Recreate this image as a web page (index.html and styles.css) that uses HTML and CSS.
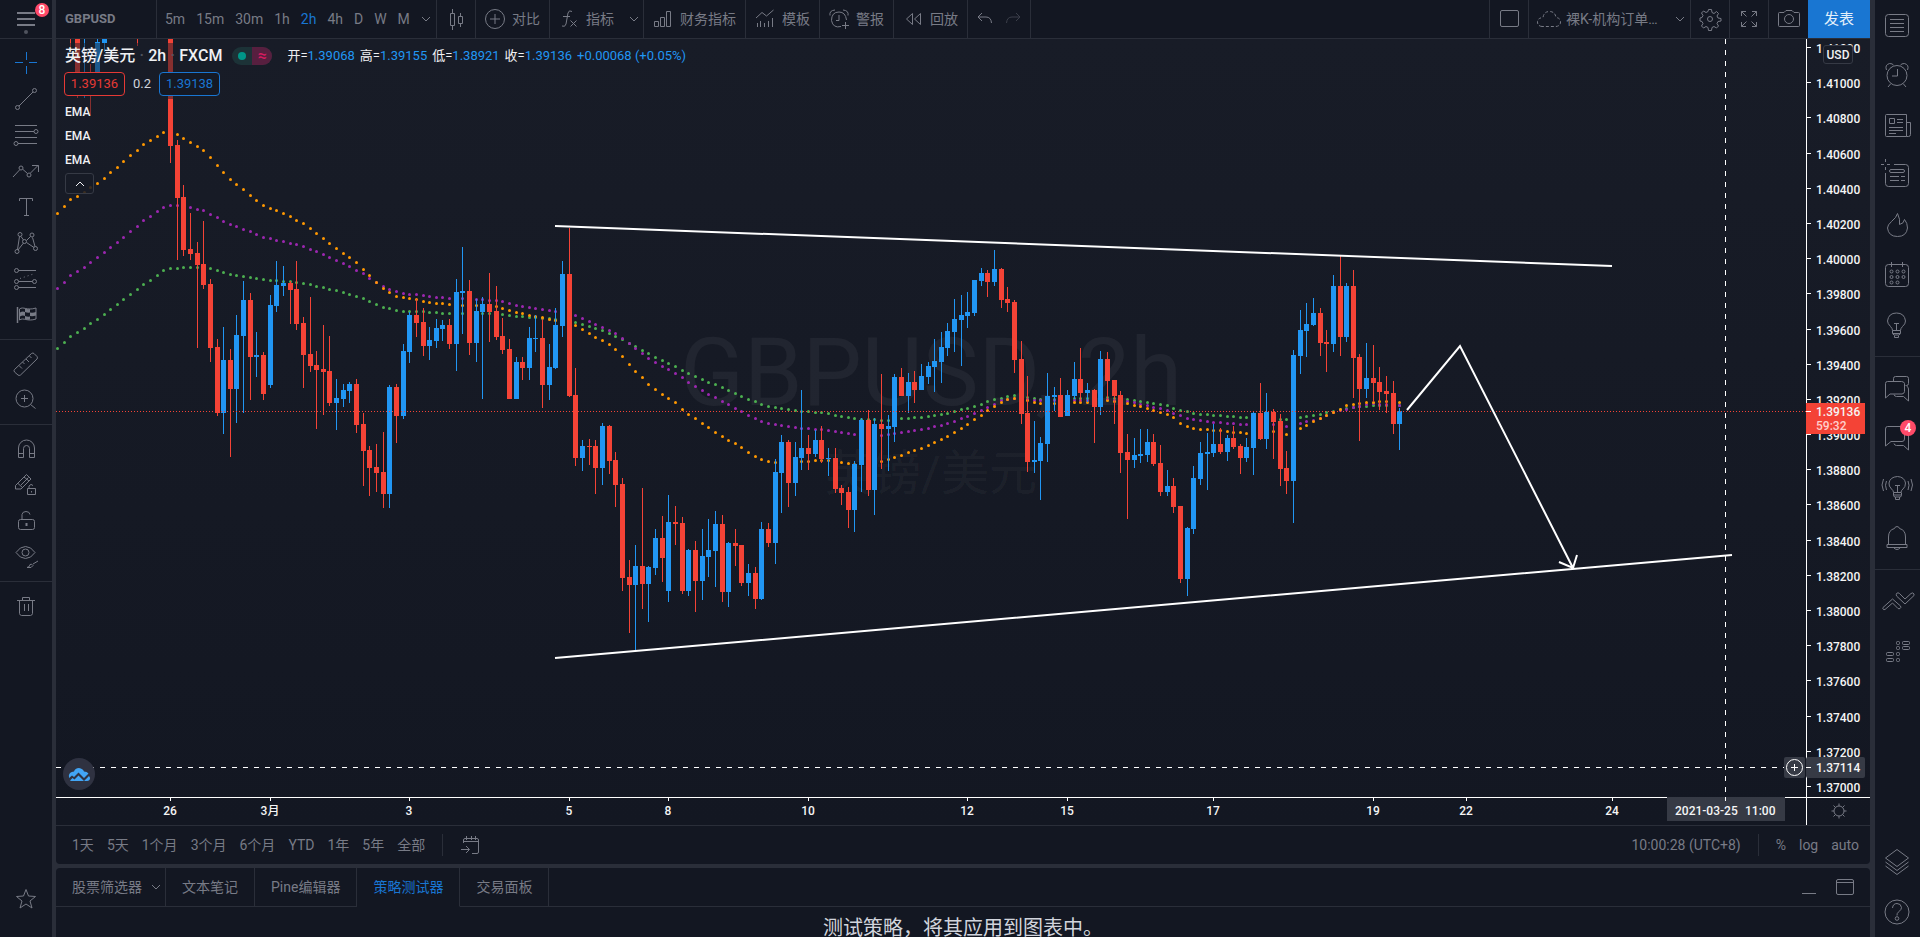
FILE: index.html
```html
<!DOCTYPE html>
<html lang="zh-CN">
<head>
<meta charset="utf-8">
<title>GBPUSD 2h</title>
<link rel="stylesheet" href="styles.css">
</head>
<body>
<div class="app">

<aside class="side left">
  <button class="menu" aria-label="菜单">
    <svg class="ico" viewBox="0 0 28 28"><path stroke-width="2" d="M5 8h18M5 14h18M5 20h18"/></svg>
    <span class="dot"></span>
    <span class="badge">8</span>
  </button>
  <div class="tools">
    <button aria-label="十字线"><svg class="ico on" viewBox="0 0 28 28"><path d="M3 13.500h8M17 13.500h8M14.500 3v8M14.500 17v8"/></svg></button>
    <button aria-label="趋势线"><svg class="ico" viewBox="0 0 28 28"><path d="M7 21L21 7"/><circle cx="5.500" cy="22.500" r="2"/><circle cx="22.500" cy="5.500" r="2"/></svg></button>
    <button aria-label="斐波那契"><svg class="ico" viewBox="0 0 28 28"><path d="M3 4.500h22M3 10.500h19M3 16.500h22M6 22.500h19"/><circle cx="24" cy="10.500" r="2"/><circle cx="4" cy="22.500" r="2"/></svg></button>
    <button aria-label="形状"><svg class="ico" viewBox="0 0 28 28"><path d="M1 20l6.500-7M11 12.500l4.500 4M18.500 16L26 8.500M20 8.500h6.500V15"/><circle cx="9" cy="11" r="2"/><circle cx="17" cy="18" r="2"/></svg></button>
    <button aria-label="文字"><svg class="ico" viewBox="0 0 28 28"><path d="M7.500 8V5.500h13V8M14.500 5.500v17M12 22.500h5"/></svg></button>
    <button aria-label="形态"><svg class="ico" viewBox="0 0 28 28"><path d="M7.500 7.500L5.500 20.500M9 7.500l2.500 3.500M6 21l5.500-7M14.500 11.500l4-4M14.500 13.500l7.500 5M20.500 8.500l2.500 9"/><circle cx="8" cy="5.500" r="2"/><circle cx="20" cy="6" r="2"/><circle cx="12.500" cy="12.500" r="2"/><circle cx="5" cy="22.500" r="2"/><circle cx="23.500" cy="19.500" r="2"/></svg></button>
    <button aria-label="预测"><svg class="ico" viewBox="0 0 28 28"><path d="M6.500 5.500H24M6.500 16.500h14M6.500 22.500H24"/><path stroke-dasharray="1 3" d="M8 13.500l15-5"/><circle cx="4.500" cy="5.500" r="2"/><circle cx="4.500" cy="16.500" r="2"/><circle cx="4.500" cy="22.500" r="2"/><circle cx="22.500" cy="16.500" r="2"/></svg></button>
    <button aria-label="图标"><svg class="ico" viewBox="0 0 28 28"><path stroke-width="1.500" d="M5.500 6v16"/><path d="M7.500 8c4-3 7 2 16.500-1v11c-9 3-12.500-2-16.500 1z"/><path fill="currentColor" stroke="none" d="M13 7.500q2.500 1 5 .5v3.500q-2.500.5-5-.5zM8 11.500q2.500-1.500 5-.5v4q-2.500-1-5 .5zM18 11.500q3 .5 6-.5v3.500q-3 1-6 .5zM13 15q2.500 1 5 .5v3q-2.500.5-5-.5z"/></svg></button>
  </div>
  <div class="tools">
    <button aria-label="测量"><svg class="ico" viewBox="0 0 28 28"><path d="M2.500 19.500L19.500 3.500q1.500-1 2.500 0l3 3q1 1.500 0 2.500L8.500 25q-1.500 1-2.500 0l-3.500-3q-1-1.500 0-2.500zM7 15.500l3 3M10.500 12l2 2M14 9l3 3M17.500 6l2 2"/></svg></button>
    <button aria-label="放大"><svg class="ico" viewBox="0 0 28 28"><circle cx="12.500" cy="12.500" r="8.500"/><path d="M12.500 9v7M9 12.500h7M18.500 18.500l5 4"/></svg></button>
  </div>
  <div class="tools">
    <button aria-label="磁铁"><svg class="ico" viewBox="0 0 28 28"><path d="M6.500 22.500V13a8 8 0 0 1 16 0v9.500h-5V13.500a3 3 0 0 0-6 0v9zM6.500 18.500h5M17.500 18.500h5"/></svg></button>
    <button aria-label="绘图模式"><svg class="ico" viewBox="0 0 28 28"><path d="M3.500 14.500L14.500 3.500l4.500 4.500L9 18H3.500zM6 12.500l5 4.500M12 6l5 4M9 14l7.500-7.500M15.500 17.500h8v6h-8zM17 17v-2q2-3 4-.5M19.500 20v1.500"/></svg></button>
    <button aria-label="锁定"><svg class="ico" viewBox="0 0 28 28"><rect x="6.500" y="12.500" width="16" height="10" rx="2"/><path d="M10 12V7.500q.5-3 4-3t4 3"/><path stroke-width="2" d="M14.500 16v3"/></svg></button>
    <button aria-label="隐藏"><svg class="ico" viewBox="0 0 28 28"><path d="M4 9.500Q8 3.500 13.500 3.500T23 9.500Q19 15.500 13.500 15.500T4 9.500z"/><circle cx="13.500" cy="9.500" r="3.500"/><path d="M26 18l-5 3M15 24.500q3-.5 3-3 2-1 3 1-1 3-6 2z"/></svg></button>
  </div>
  <div class="tools">
    <button aria-label="删除"><svg class="ico" viewBox="0 0 28 28"><path d="M5 8.500h18M10.500 8V5.500h7V8M7.500 9v12.500q.5 2 2 2h9q1.500 0 2-2V9M12.500 12v7M16.500 12v7"/></svg></button>
  </div>
  <button class="star" aria-label="收藏"><svg class="ico" viewBox="0 0 28 28"><path d="M14 4.500l2.500 6.500 7 .5-5.500 4.500 2 7-6-4-6 4 2-7-5.500-4.500 7-.5z"/></svg></button>
</aside>

<main class="center">
  <section class="chartbox">
    <header class="topbar">
      <button class="cell symbol">GBPUSD</button>
      <div class="cell intervals">
        <button>5m</button><button>15m</button><button>30m</button><button>1h</button><button class="active">2h</button><button>4h</button><button>D</button><button>W</button><button>M</button>
        <button class="chevbtn" aria-label="更多周期"><svg class="chev" viewBox="0 0 10 6"><path d="M1 1l4 4 4-4"/></svg></button>
      </div>
      <button class="cell square" aria-label="K线图"><svg class="ico" viewBox="0 0 28 28"><path d="M8.500 8.500h4v12h-4zM10.500 4v4M10.500 21v4M16.500 11.500h4v7h-4zM18.500 8v3M18.500 19v3"/></svg></button>
      <button class="cell item"><svg class="i20" viewBox="0 0 20 20"><circle cx="10" cy="10" r="9.500"/><path d="M10 5v10M5 10h10"/></svg>对比</button>
      <div class="cell item fx">
        <button class="item"><svg class="i20" viewBox="0 0 20 20"><path d="M13 2.500q-3-2-4 1.500L7 15q-1 3.500-4 2M4 7.500h7M11.500 11.500l6 6M17.500 11.500l-6 6"/></svg>指标</button>
        <button class="chevbtn" aria-label="收藏指标"><svg class="chev" viewBox="0 0 10 6"><path d="M1 1l4 4 4-4"/></svg></button>
      </div>
      <button class="cell item"><svg class="i20" viewBox="0 0 20 20"><path d="M1.500 12.500h4v5h-4zM7.500 8.500h4v9h-4zM13.500 2.500h4v15h-4z"/></svg>财务指标</button>
      <button class="cell item"><svg class="i20" viewBox="0 0 20 20"><path d="M1 9l6-5.500L11.500 7l7-6M2.500 14v4M5.500 12v6M9.500 14v4M13.500 12v6M17.500 9v9"/></svg>模板</button>
      <button class="cell item"><svg class="i20" viewBox="0 0 20 20"><path d="M12 17.500q-8 2-9.500-6 0-8.500 7.500-8.500 6.500 0 7.500 8M10 6v5.500H7M1 6.500q-1-5 5-5.500M14 1q6 .5 5 5.500M16.500 13v7M13 16.500h7"/></svg>警报</button>
      <button class="cell item"><svg class="i20" viewBox="0 0 20 20"><path d="M9.500 4.500v11l-6-5.500zM17.500 4.500v11l-6-5.500z"/></svg>回放</button>
      <div class="cell history">
        <button aria-label="撤销"><svg class="i20" viewBox="0 0 20 20"><path d="M7 4L3 8l4 4M3 8h8q5 0 5.500 6"/></svg></button>
        <button class="dim" aria-label="重做"><svg class="i20" viewBox="0 0 20 20"><path d="M13 4l4 4-4 4M17 8H9q-5 0-5.500 6"/></svg></button>
      </div>
      <div class="spacer"></div>
      <button class="cell square first" aria-label="布局"><svg class="ico" viewBox="0 0 28 28"><rect x="5.500" y="5.500" width="18" height="16" rx="1.500"/></svg></button>
      <button class="cell layout">
        <svg class="cloud" viewBox="0 0 24 18"><path stroke-dasharray="3 2" d="M5 16.500Q.5 16 .5 12T6 7.500Q7 1.500 12.500 1.500T19 7.500Q23.500 8 23.500 12T19 16.500z"/></svg>
        <span>裸K-机构订单…</span>
        <svg class="chev" viewBox="0 0 10 6"><path d="M1 1l4 4 4-4"/></svg>
      </button>
      <button class="cell square" aria-label="设置"><svg class="ico" viewBox="0 0 28 28"><circle cx="14" cy="14" r="2.500"/><path d="M12.500 4.500h3l.5 3 2 1 2.500-2 2 2-1.500 2.500 1 2 3 .5v2.500l-3 .5-1 2 1.500 2.500-2 2-2.500-1.500-2 1-.5 3h-3l-.5-3-2-1L7.500 23l-2-2L7 18.500l-1-2-2-.5v-3l2-.5 1-2L5.500 8l2-2L10 7.500l2-1z"/></svg></button>
      <button class="cell square" aria-label="全屏"><svg class="ico" viewBox="0 0 28 28"><path d="M6.500 11V6.500H11M6.500 6.500l5 5M17 6.500h4.500V11M21.500 6.500l-5 5M6.500 17v4.500H11M6.500 21.500l5-5M17 21.500h4.500V17M21.500 21.500l-5-5"/></svg></button>
      <button class="cell square last" aria-label="截图"><svg class="ico" viewBox="0 0 28 28"><path d="M4.500 7.500H9l2-2h6l2 2h4.500q1 0 1 1v12q0 1-1 1h-19q-1 0-1-1v-12q0-1 1-1z"/><circle cx="14" cy="14" r="4.500"/></svg></button>
      <button class="publish">发表</button>
    </header>

    <div class="chart">
      <svg id="plot" class="plot" role="img" aria-label="英镑/美元 2h"></svg>
      <div class="legend">
        <div class="title"><span>英镑/美元</span><i>·</i><span>2h</span><i>·</i><span>FXCM</span>
          <span class="pill"><b></b><em>≈</em></span>
          <span class="ohlc"><span>开=<u>1.39068</u></span><span>高=<u>1.39155</u></span><span>低=<u>1.38921</u></span><span>收=<u>1.39136</u></span><u>+0.00068 (+0.05%)</u></span>
        </div>
        <div class="quotes"><button class="sell">1.39136</button><span>0.2</span><button class="buy">1.39138</button></div>
        <div class="study">EMA</div>
        <div class="study">EMA</div>
        <div class="study">EMA</div>
        <button class="fold" aria-label="收起"><svg class="chev" viewBox="0 0 10 6"><path d="M1 5l4-4 4 4"/></svg></button>
      </div>
      <button class="usd">USD</button>
      <button class="snap" aria-label="云图表"><svg viewBox="0 0 32 32"><path fill="#42a5f5" d="M6 20q-1-3 1-5 1.500-1.500 4-1.500Q12 10 16 10q4 .5 5 3.500 3 0 4.500 2L21 20l-5.500-5.500L11 19l-2-1.500zM7 22.500l2.500-2.500 2 1.500 4-4 5.500 5.500 5-5q2 2 .5 4-1 1-2.500 1H8z"/></svg></button>
      <button class="axisgear" aria-label="坐标设置"><svg viewBox="0 0 16 16"><circle cx="8" cy="8" r="5"/><path d="M8 .5v2.500M8 13v2.500M.5 8H3M13 8h2.500M2.500 2.500l2 2M11.500 11.500l2 2M13.500 2.500l-2 2M4.500 11.500l-2 2"/></svg></button>
    </div>

    <footer class="ranges">
      <button>1天</button><button>5天</button><button>1个月</button><button>3个月</button><button>6个月</button><button>YTD</button><button>1年</button><button>5年</button><button>全部</button>
      <span class="rule"></span>
      <button aria-label="前往日期"><svg class="i20" viewBox="0 0 20 20"><path d="M3.500 8V5q0-1.500 1.500-1.500h12q1.500 0 1.500 1.500v12q0 1.500-1.500 1.500h-5M3.500 6.500h15M6.500 1v4M11.500 1v4M15.500 1v4M1 14.500h8M6 11l3.500 3.500L6 18"/></svg></button>
      <span class="spacer"></span>
      <button>10:00:28 (UTC+8)</button>
      <span class="rule"></span>
      <button>%</button><button>log</button><button>auto</button>
    </footer>
  </section>

  <section class="panel">
    <nav class="tabs">
      <button class="tab menu-tab">股票筛选器<svg class="chev" viewBox="0 0 10 6"><path d="M1 1l4 4 4-4"/></svg></button>
      <button class="tab">文本笔记</button>
      <button class="tab">Pine编辑器</button>
      <button class="tab active">策略测试器</button>
      <button class="tab">交易面板</button>
      <span class="fill">
        <button aria-label="最小化"><svg class="i20" viewBox="0 0 20 20"><path d="M3 16.500h14"/></svg></button>
        <button aria-label="最大化"><svg class="i20" viewBox="0 0 20 20"><rect x="1.500" y="2.500" width="17" height="15" rx="1.500"/><path d="M1.500 5.500h17"/></svg></button>
      </span>
    </nav>
    <p class="hint">测试策略，将其应用到图表中。</p>
  </section>
</main>

<aside class="side right">
  <div class="group">
    <button aria-label="观察列表"><svg class="ico" viewBox="0 0 28 28"><rect x="2.500" y="3.500" width="23" height="22" rx="3"/><path d="M7 8.500h14M7 12.500h14M7 16.500h14M7 20.500h14"/></svg></button>
    <button aria-label="警报"><svg class="ico" viewBox="0 0 28 28"><circle cx="14" cy="14.500" r="10"/><path d="M14.500 8v7H9M7.500 23L5 26M20.500 23l2.500 3M3.500 9q-2-5 3-6.500 3 0 4 1.500M24.500 9q2-5-3-6.500-3 0-4 1.500"/></svg></button>
    <button aria-label="新闻"><svg class="ico" viewBox="0 0 28 28"><path d="M3.500 3.500h20v22h-20q-1 0-1-1v-20q0-1 1-1zM23.500 11.500h4v12q0 2-2 2h-2M6.500 7.500h5v5h-5zM14 8.500h6M14 11.500h6M6 16.500h14M6 19.500h14M6 22.500h7"/></svg></button>
    <button aria-label="数据窗口"><svg class="ico" viewBox="0 0 28 28"><path d="M11 3.500h11.500q3 0 3 3v16q0 3-3 3h-17q-3 0-3-3V12M-2 3.500h3M4 3.500h3M2.500-2v3M2.500 6v3"/><rect x="6.500" y="8.500" width="15" height="3" rx="1.500"/><path d="M7 15.500h9M18 15.500h4M7 19.500h9M18 19.500h4"/></svg></button>
    <button aria-label="热门"><svg class="ico" viewBox="0 0 28 28"><path d="M14.500 2.500q-1 4-6 8Q4.500 14 4.500 17q1 8.500 10 8.500t10-8.500q0-5-3-8.500-.5 4-5 5 1-5-2-11z"/></svg></button>
    <button aria-label="日历"><svg class="ico" viewBox="0 0 28 28"><rect x="2.500" y="3.500" width="23" height="22" rx="3"/><path d="M8.500 1v5M19.500 1v5"/><g><circle cx="8.500" cy="10.500" r="1.500"/><circle cx="14.500" cy="10.500" r="1.500"/><circle cx="20.500" cy="10.500" r="1.500"/><circle cx="8.500" cy="16" r="1.500"/><circle cx="14.500" cy="16" r="1.500"/><circle cx="20.500" cy="16" r="1.500"/><circle cx="8.500" cy="21.500" r="1.500"/><circle cx="14.500" cy="21.500" r="1.500"/></g></svg></button>
    <button aria-label="我的观点"><svg class="ico" viewBox="0 0 28 28"><path d="M9.500 19.500q0-2-2-4-3-3-3-5.500 1-8 9-8t9 8q0 3-3 5.500-2 2-2 4zM9.500 19.500v2.500q0 1.500 2 2h4q2-.5 2-2v-2.500M10 22.500h7M11.500 24.500v2h4v-2M13.500 12v7M11 12.500h5"/></svg></button>
  </div>
  <div class="group">
    <button aria-label="公共聊天"><svg class="ico" viewBox="0 0 28 28"><path d="M10.500 7V4.500q0-2 2-2h11q2 0 2 2v5q0 2-2 2h-1M23.500 12q2 1 2 3v12l-5-4.500h-7q-2 0-2.500-2M4.500 7.500h14q2.500 0 3 2v8q0 2-2.500 2.500H7L2.500 24V9.500q0-2 2-2z"/></svg></button>
    <button class="withbadge" aria-label="私聊"><svg class="ico" viewBox="0 0 28 28"><path d="M4.500 2.500H19q2.500 0 2.500 2.500v10q0 2.500-2.500 2.500H8L2.500 22V5q0-2.500 2-2.500zM25.500 10v16l-5-4.500h-7q-2 0-2.500-2"/></svg><span class="badge">4</span></button>
    <button aria-label="观点流"><svg class="ico" viewBox="0 0 28 28"><path d="M10.500 18.500q0-2-2-3.500-3-3-2.500-6 1-6 8.500-6.500 7 .5 8 6.500 0 4-2.500 6-2 1.500-2 3.500zM10.500 18.500v3q0 1.500 2 1.500h4q2 0 2-1.500v-3M10.500 21h8M12.500 23v2.500h4V23M14.500 11.500v7M12 11.500h5M3.500 7q-2 4 0 9M.5 5q-3 6 0 12M25 7q2 4 0 9M28 5q3 6 0 12"/></svg></button>
    <button aria-label="通知"><svg class="ico" viewBox="0 0 28 28"><path d="M5.500 20.500V13q0-7 6-8.500 0-1.500 2.500-2 2.500.5 2.500 2 6 1.500 6 8.500v7.500M4 20.500h20v3H4zM10.500 23.500q3.500 4 7 0"/></svg></button>
  </div>
  <div class="group">
    <button aria-label="订单面板"><svg class="ico" viewBox="0 0 28 28"><path d="M0 20.500L9.500 12l8 7q1 1.500-.5 2.500-1 .5-2 0L9.500 16 2 22.500q-1.500.5-2-.5-.5-1 0-1.500zM13.500 6.500q1.500-1.500 3 0L22 12l6-5.500q2-1.500 3 .5v1.500L22 17l-8.500-8q-.5-1.500 0-2.500z"/></svg></button>
    <button aria-label="深度"><svg class="ico" viewBox="0 0 28 28"><rect x="13.500" y="4.500" width="3" height="3" rx="1"/><rect x="19.500" y="4.500" width="7" height="3" rx="1"/><rect x="13.500" y="9.500" width="3" height="3" rx="1"/><rect x="19.500" y="9.500" width="7" height="3" rx="1"/><rect x="3.500" y="15.500" width="7" height="3" rx="1"/><rect x="13.500" y="15.500" width="3" height="3" rx="1"/><rect x="3.500" y="21.500" width="7" height="3" rx="1"/><rect x="13.500" y="21.500" width="3" height="3" rx="1"/></svg></button>
  </div>
  <div class="group foot">
    <button aria-label="对象树"><svg class="ico" viewBox="0 0 28 28"><path d="M14 1.500l11.500 8.500L14 18.500 2.500 10zM2.500 14L14 22.500 25.500 14M2.500 18L14 26.500 25.500 18"/></svg></button>
    <button aria-label="帮助"><svg class="ico" viewBox="0 0 28 28"><circle cx="14" cy="14" r="12"/><path d="M9.500 10q.5-4.500 4.500-4.500t4.500 4q0 2-2.500 4t-2 4"/><circle cx="14" cy="20.500" r="1.800"/></svg></button>
  </div>
</aside>
</div>
<script src="chart.js"></script>
</body>
</html>
```
FILE: styles.css
```css
* { box-sizing: border-box; }
body {
  margin: 0;
  background: #2a2e39;
  color: #787b86;
  font: 14px/20px Roboto, "Noto Sans CJK SC", sans-serif;
  overflow: hidden;
}
button {
  margin: 0;
  padding: 0;
  border: 0;
  background: none;
  color: inherit;
  font: inherit;
  white-space: nowrap;
  cursor: pointer;
}
svg { display: block; flex: none; fill: none; stroke: currentColor; }
i, em, u { font-style: normal; text-decoration: none; }

.app {
  display: grid;
  grid-template-columns: 52px minmax(0, 1fr) 45px;
  height: 100vh;
}
.ico { width: 28px; height: 28px; overflow: visible; }
.i20 { width: 20px; height: 20px; }
.chev { width: 10px; height: 6px; }
.on, .active { color: #1976d2; }
.spacer { flex: 1; }
.badge {
  position: absolute;
  border-radius: 8px;
  background: #ff4a68;
  color: #fff;
  font-weight: 500;
  font-size: 12px;
  text-align: center;
}

/* side toolbars */
.side { display: flex; flex-direction: column; background: #131722; }
.menu {
  position: relative;
  display: flex;
  justify-content: center;
  height: 38px;
  padding-top: 5px;
}
.menu .badge { top: 3px; right: 3px; width: 14px; height: 14px; line-height: 14px; }
.menu .dot {
  position: absolute;
  bottom: 4px;
  left: 24px;
  width: 4px;
  height: 4px;
  border-radius: 2px;
  background: #50535e;
}
.tools {
  display: flex;
  flex-direction: column;
  padding: 6px 0;
  border-top: 1px solid #2a2e39;
}
.tools button {
  display: flex;
  align-items: center;
  justify-content: center;
  height: 36px;
}
.star { display: flex; justify-content: center; height: 52px; margin-top: auto; }
.group {
  display: flex;
  flex-direction: column;
  padding-bottom: 6px;
}
.group + .group { padding-top: 6px; border-top: 1px solid #2a2e39; }
.group button {
  position: relative;
  display: flex;
  align-items: center;
  justify-content: center;
  height: 50px;
  padding-right: 2px;
}
.group.foot { margin-top: auto; padding-bottom: 0; border: 0; }
.withbadge .badge { top: 7px; right: 4px; width: 16px; height: 16px; line-height: 16px; }

/* centre */
.center {
  display: flex;
  flex-direction: column;
  gap: 4px;
  margin: 0 5px 0 4px;
}
.chartbox {
  display: flex;
  flex: 1;
  flex-direction: column;
  min-height: 0;
  border-radius: 0 0 4px 4px;
  background: #131722;
}
.topbar {
  display: flex;
  flex: none;
  height: 39px;
  border-bottom: 1px solid #2a2e39;
}
.cell {
  display: flex;
  align-items: center;
  border-right: 1px solid #2a2e39;
}
.symbol { width: 101px; padding-left: 9px; font-weight: 700; font-size: 13px; }
.intervals { width: 280px; padding-left: 3px; }
.intervals button { padding: 0 6px 0 5px; }
.chevbtn { display: flex; }
.square { justify-content: center; width: 39px; }
.square.first { width: 40px; border-left: 1px solid #2a2e39; }
.square.last { border-right: 0; }
.item { display: flex; align-items: center; gap: 7px; }
.cell.item { padding: 0 9px; }
.cell.fx { gap: 9px; padding-right: 4px; }
.fx .chevbtn { padding-left: 6px; }
.history { gap: 8px; padding: 0 7px; }
.dim { opacity: .4; }
.layout { gap: 5px; width: 162px; padding: 0 4px 0 8px; }
.layout .chev { margin: 0 1px 0 auto; }
.cloud { width: 24px; height: 18px; }
.publish { width: 62px; height: 38px; background: #1976d2; color: #e3effa; font-size: 15px; }

.chart {
  position: relative;
  flex: 1;
  min-height: 0;
  background: linear-gradient(#181c27, #131722);
}
.plot { width: 100%; height: 100%; position: absolute; inset: 0; stroke: none; overflow: hidden; }
.plot text { font-weight: 500; font-size: 12px; fill: #f5f5f5; dominant-baseline: central; }
.plot .mark { font-weight: 400; font-size: 94px; fill: #fff; fill-opacity: .05; text-anchor: middle; dominant-baseline: auto; }
.plot .mark.small { font-size: 48px; }
.plot .time { text-anchor: middle; }
.plot .soft { fill: #ffcfcb; }

.legend {
  position: absolute;
  top: 4px;
  left: 6px;
  display: flex;
  flex-direction: column;
  align-items: flex-start;
  color: #f0f1f4;
}
.legend > div { background: rgba(24, 28, 39, .5); }
.title {
  display: flex;
  align-items: center;
  height: 26px;
  padding-left: 3px;
  font-weight: 500;
  font-size: 16px;
}
.title i { width: 13px; color: #50535e; text-align: center; }
.pill {
  display: flex;
  width: 40px;
  height: 18px;
  margin: 0 15px 0 10px;
  overflow: hidden;
  border-radius: 9px;
  background: #1c3237;
}
.pill b { width: 8px; height: 8px; margin: 5px 6px; border-radius: 4px; background: #009688; }
.pill em { width: 20px; background: #571f3f; color: #d81b60; line-height: 17px; text-align: center; }
.ohlc { display: flex; gap: 5px; font-weight: 400; font-size: 13px; }
.ohlc u { color: #2196f3; }
.quotes { display: flex; align-items: center; gap: 8px; height: 30px; padding: 0 2px; font-size: 13px; }
.quotes button { width: 61px; height: 24px; border: 1px solid; border-radius: 4px; background: #151924; }
.quotes span { color: #d1d4dc; }
.sell { color: #e53935; }
.buy { color: #1976d2; }
.study { height: 24px; padding: 0 3px; font-weight: 500; font-size: 12px; line-height: 27px; }
.fold {
  display: grid;
  place-items: center;
  width: 29px;
  height: 21px;
  margin: 2px 0 0 3px;
  border: 1px solid #363a45;
  border-radius: 3px;
  background: rgba(24, 27, 39, .85);
}
.usd {
  position: absolute;
  top: 6px;
  right: 17px;
  width: 30px;
  height: 19px;
  border: 1px solid #363a45;
  border-radius: 3px;
  background: #181c27;
  color: #f0f1f4;
  font-weight: 500;
  font-size: 12px;
  line-height: 16px;
}
.snap {
  position: absolute;
  bottom: 35px;
  left: 7px;
  width: 32px;
  height: 32px;
  border-radius: 16px;
  background: #2f3241;
}
.snap svg { stroke: none; }
.axisgear { position: absolute; right: 23px; bottom: 6px; }
.axisgear svg { width: 16px; height: 16px; }

.ranges {
  display: flex;
  flex: none;
  align-items: center;
  gap: 13px;
  height: 39px;
  padding: 0 11px 0 16px;
  border-top: 1px solid #2a2e39;
}
.rule { width: 1px; height: 22px; margin: 0 4px; background: #2a2e39; }

/* bottom panel */
.panel { flex: none; height: 69px; border-radius: 4px 4px 0 0; background: #131722; overflow: hidden; }
.tabs { display: flex; height: 39px; }
.tab, .fill { border-bottom: 1px solid #2a2e39; }
.tab { padding: 0 16px; border-right: 1px solid #2a2e39; }
.menu-tab { display: flex; align-items: center; gap: 9px; padding-right: 4px; }
.tab.active { border-bottom-color: #131722; }
.fill { display: flex; flex: 1; align-items: center; justify-content: flex-end; gap: 16px; padding-right: 15px; }
.hint { margin: 9px 0 0; color: #d1d4dc; font-size: 20px; line-height: 24px; text-align: center; }
```
FILE: chart.js
```js
(function () {
  var NS = 'http://www.w3.org/2000/svg';
  var svg = document.getElementById('plot');
  var W = svg.clientWidth, H = svg.clientHeight;
  var AX = W - 64, AY = H - 28;
  var LEFT = 56, TOP = 39;
  var UP = '#2196f3', DOWN = '#f44336';

  function add(parent, name, attrs, text) {
    var el = document.createElementNS(NS, name);
    for (var k in attrs) el.setAttribute(k, attrs[k]);
    if (text) el.textContent = text;
    parent.appendChild(el);
    return el;
  }
  function barX(i) { return Math.round(170 + 6.645 * i); }

  // direction, high, body top, body bottom, low
  var early = {
    '-15': 'r 20 20 30 50', '-14': 'r 20 20 72 98', '-13': 'b 20 20 30 98', '-12': 'r 64 64 64 115',
    '-11': 'b 39 42 72 72', '-10': 'b 20 20 43 52', '-5': 'r 20 20 30 46'
  };
  var bars = ('r 20 20 146 163,r 140 145 198 260,r 185 197 250 256,r 213 249 254 260,r 242 253 265 348,r 221 264 285 289,' +
    'r 279 284 348 362,r 339 347 413 416,b 327 360 413 434,r 349 360 389 457,b 315 335 389 423,b 281 300 336 413,' +
    'r 293 300 357 400,b 332 355 357 377,r 352 355 394 400,b 295 305 385 388,b 261 285 306 312,b 266 283 286 296,' +
    'r 281 283 290 324,r 261 289 324 330,r 317 323 355 388,r 297 354 366 372,r 351 365 370 429,r 325 369 372 415,' +
    'r 336 371 403 406,b 379 398 403 430,b 384 390 399 407,b 382 384 391 403,r 379 384 425 433,r 413 424 451 486,' +
    'r 446 450 468 496,r 444 467 473 492,r 432 472 494 508,b 385 387 494 508,r 384 387 416 443,b 344 351 416 419,' +
    'b 312 315 352 363,r 299 315 323 337,r 308 322 346 356,b 327 340 346 360,b 319 328 341 348,b 320 325 329 341,' +
    'r 319 325 344 349,b 279 292 344 371,b 247 291 293 334,r 280 291 343 355,b 299 311 343 362,b 297 304 312 399,' +
    'r 273 304 312 342,r 286 311 337 340,r 318 336 350 354,r 339 349 399 399,b 357 362 399 399,r 357 362 368 380,' +
    'b 327 338 368 380,b 315 338 339 352,r 319 338 385 408,b 344 367 385 400,b 308 325 368 369,b 261 274 326 337,' +
    'r 228 274 396 397,r 368 395 458 466,b 440 446 458 471,r 439 446 447 465,r 440 446 468 494,b 423 426 468 485,' +
    'r 425 426 461 474,r 452 460 485 507,r 478 484 578 591,r 560 577 585 633,b 545 566 585 650,r 488 566 584 609,' +
    'b 566 567 584 622,b 529 538 568 575,r 516 538 558 582,b 495 522 591 602,r 506 522 524 545,r 517 523 591 594,' +
    'b 549 550 591 596,r 541 550 581 612,b 529 556 581 600,b 519 550 557 577,b 511 524 551 587,r 515 524 592 602,' +
    'b 542 543 592 607,r 529 543 546 566,r 545 545 583 586,b 564 573 583 596,r 567 573 599 609,b 522 529 599 600,' +
    'r 523 529 543 547,b 459 472 543 564,b 435 442 473 513,r 440 442 483 507,b 442 457 483 496,b 390 448 458 470,' +
    'r 435 448 454 470,b 430 440 454 457,r 426 440 459 463,b 448 458 459 476,r 448 458 489 493,r 485 488 493 505,' +
    'r 487 492 510 528,b 461 464 510 532,b 418 420 465 492,r 410 420 490 496,b 418 424 490 515,r 374 424 429 469,' +
    'b 415 426 429 471,b 374 377 427 442,r 368 377 396 396,b 373 382 396 413,r 371 382 390 403,b 364 376 390 390,' +
    'b 362 366 377 384,b 339 361 367 392,b 332 347 362 383,b 323 331 348 356,b 299 319 332 352,b 295 315 320 366,' +
    'b 292 312 316 328,b 280 280 313 316,b 268 273 281 286,r 270 273 282 297,b 250 269 282 286,r 268 269 300 308,' +
    'r 287 299 303 312,r 300 302 360 373,r 341 359 414 424,r 376 413 462 472,b 421 460 462 473,b 437 443 461 500,' +
    'b 373 396 444 462,b 387 395 397 411,r 378 395 417 417,b 390 395 416 416,b 362 379 396 399,r 348 379 393 402,' +
    'b 383 390 393 402,r 389 390 407 443,b 351 359 407 415,r 352 359 381 400,r 380 380 396 424,r 391 395 453 473,' +
    'r 434 452 460 519,b 438 455 460 468,b 429 454 456 463,b 429 442 455 462,r 434 442 464 466,r 445 463 492 496,' +
    'b 470 486 492 496,r 478 486 507 513,r 506 506 579 583,b 527 528 579 596,b 466 478 529 534,b 442 453 479 485,' +
    'b 433 452 454 490,b 424 444 453 457,r 428 444 452 454,b 435 438 452 461,r 426 438 447 449,r 444 446 458 474,' +
    'b 438 447 458 462,b 412 413 448 475,r 383 413 439 440,b 393 412 439 449,r 409 412 422 459,r 414 421 469 486,' +
    'r 451 468 481 494,b 350 355 481 523,b 310 330 356 374,b 303 324 331 357,b 298 313 325 326,r 308 313 343 356,' +
    'r 330 342 344 372,b 275 286 344 352,r 256 286 337 356,b 283 286 337 342,r 270 286 358 398,r 354 357 389 441,' +
    'b 343 378 389 398,r 345 378 383 402,r 367 382 392 410,r 376 391 394 413,r 381 393 424 434,b 408 411 424 450').split(',');

  // moving averages: bar index, level
  var averages = [
    ['#4caf50', '-17 348,-15 336,-11 319,-7 299,-4 284,-2 275,-1 270,0 268,3 267,6 268,8 272,10 275,13 278,15 280,18 281,20 283,25 290,29 298,32 307,35 311,37 311,42 313,48 313,50 314,52 316,55 317,58 319,61 322,65 330,68 339,71 350,75 363,79 376,83 387,87 399,90 406,94 410,96 411,99 413,101 416,103 418,105 419,108 420,110 418,113 417,116 414,118 411,121 406,124 399,126 396,127 395,129 397,131 399,138 398,141 397,144 399,147 402,150 405,152 410,155 414,160 416,164 418,168 419,170 417,173 414,176 409,179 406,182 405,185 405'],
    ['#9c27b0', '-17 288,-15 275,-13 267,-8 242,-4 220,-2 211,-1 207,0 205,1 205,3 207,5 210,8 221,12 231,14 237,17 241,20 246,23 254,26 263,29 273,31 282,32 286,33 289,35 293,37 294,39 296,42 298,47 299,50 301,52 305,56 309,58 311,61 315,64 324,67 333,70 348,72 358,76 373,80 390,84 404,88 418,90 423,94 427,98 429,101 432,103 434,107 435,109 433,113 429,117 423,120 416,123 407,125 400,127 398,131 400,136 400,141 399,144 401,147 405,150 410,153 418,156 421,160 423,162 424,166 424,168 426,170 423,173 418,175 412,178 407,181 403,185 405'],
    ['#ff9800', '-17 213,-15 199,-14 196,-10 178,-4 144,-1 132,1 134,5 150,9 179,14 205,17 213,20 223,24 243,28 262,30 275,32 288,34 296,37 299,39 302,42 304,46 305,49 306,50 308,52 312,55 316,58 320,61 325,63 333,66 344,67 349,68 356,69 364,72 384,74 394,76 402,77 409,80 423,83 436,86 447,88 456,90 461,91 462,95 461,97 460,99 460,101 462,103 464,107 461,109 457,111 452,113 448,115 442,117 436,119 428,121 419,123 410,125 402,126 399,127 398,129 400,131 403,133 403,136 402,138 402,141 400,142 401,144 403,147 408,150 414,151 417,152 423,154 428,156 429,159 431,162 433,166 431,168 434,170 428,173 418,175 412,177 405,180 402,183 401,185 402']
  ];

  var clip = add(add(svg, 'defs', {}), 'clipPath', { id: 'pane' });
  add(clip, 'rect', { x: 0, y: 0, width: AX, height: AY });

  add(svg, 'text', { 'class': 'mark', x: AX / 2, y: AY * 0.483 }, 'GBPUSD, 2h');
  add(svg, 'text', { 'class': 'mark small', x: AX / 2, y: AY * 0.595 }, '英镑/美元');

  var pane = add(svg, 'g', { 'clip-path': 'url(#pane)' });
  var g = add(pane, 'g', { transform: 'translate(' + -LEFT + ' ' + -TOP + ')' });

  averages.forEach(function (a) {
    var pts = a[1].split(',').map(function (p) { return p.split(' ').map(Number); });
    for (var k = 0; k < pts.length - 1; k++) {
      var p = pts[k], q = pts[k + 1];
      for (var i = p[0]; i < q[0] || (k === pts.length - 2 && i === q[0]); i++) {
        var y = Math.round(p[1] + (q[1] - p[1]) * (i - p[0]) / (q[0] - p[0]));
        add(g, 'circle', { cx: barX(i) + 0.5, cy: y + 0.5, r: 1.5, fill: a[0] });
      }
    }
  });

  function candle(i, spec) {
    var d = spec.split(' '), c = d[0] === 'b' ? UP : DOWN, x = barX(i);
    add(g, 'rect', { x: x, y: d[1], width: 1, height: d[4] - d[1], fill: c });
    add(g, 'rect', { x: x - 2, y: d[2], width: 5, height: d[3] - d[2], fill: c });
  }
  for (var e in early) candle(+e, early[e]);
  bars.forEach(function (b, i) { candle(i, b); });

  add(g, 'path', { d: 'M56 411.500H' + (AX + LEFT), stroke: DOWN, 'stroke-dasharray': '1 2' });
  add(g, 'path', {
    d: 'M555 226L1612 266M555 658L1732 555M1407 410L1460 346L1573 568M1559 562L1573 568L1577 555',
    stroke: '#fff', 'stroke-width': 2, fill: 'none'
  });

  // axes
  add(svg, 'path', { d: 'M' + (AX + 0.5) + ' 0V' + H + 'M0 ' + (AY + 0.5) + 'H' + W, stroke: '#fff' });
  for (var n = 0; n <= 21; n++) {
    var ty = Math.round(9 + 35.190 * n);
    add(svg, 'path', { d: 'M' + AX + ' ' + (ty - 0.5) + 'h5', stroke: '#fff' });
    add(svg, 'text', { x: AX + 10, y: ty + 1 }, (1.412 - 0.002 * n).toFixed(5));
  }
  [['26', 170], ['3月', 270], ['3', 409], ['5', 569], ['8', 668], ['10', 808], ['12', 967], ['15', 1067], ['17', 1213], ['19', 1373], ['22', 1466], ['24', 1612]].forEach(function (t) {
    add(svg, 'path', { d: 'M' + (t[1] - LEFT + 0.5) + ' ' + AY + 'v4', stroke: '#fff' });
    add(svg, 'text', { 'class': 'time', x: t[1] - LEFT, y: AY + 14 }, t[0]);
  });

  // crosshair
  var cx = 1725 - LEFT, cy = 767 - TOP;
  add(svg, 'path', { d: 'M0 ' + (cy + 0.5) + 'H' + (AX - 22) + 'M' + (cx + 0.5) + ' 0V' + AY, stroke: '#fff', 'stroke-dasharray': '5 6' });
  add(svg, 'rect', { x: cx - 58, y: AY, width: 118, height: 24, fill: '#363a45' });
  add(svg, 'path', { d: 'M' + (cx + 0.5) + ' ' + AY + 'v4', stroke: '#fff' });
  add(svg, 'text', { x: cx - 50, y: AY + 14 }, '2021-03-25');
  add(svg, 'text', { x: cx + 20, y: AY + 14 }, '11:00');

  // price tags
  add(svg, 'rect', { x: AX, y: 364, width: 59, height: 31, fill: DOWN });
  add(svg, 'path', { d: 'M' + AX + ' 372.500h5', stroke: '#fff' });
  add(svg, 'text', { x: AX + 10, y: 373 }, '1.39136');
  add(svg, 'text', { 'class': 'soft', x: AX + 10, y: 387 }, '59:32');
  add(svg, 'rect', { x: AX, y: cy - 10, width: 59, height: 21, rx: 2, fill: '#363a45' });
  add(svg, 'path', { d: 'M' + AX + ' ' + (cy + 0.5) + 'h5', stroke: '#fff' });
  add(svg, 'text', { x: AX + 10, y: cy + 1 }, '1.37114');
  add(svg, 'rect', { x: AX - 22, y: cy - 10, width: 21, height: 21, rx: 2, fill: '#363a45' });
  add(svg, 'circle', { cx: AX - 11.5, cy: cy + 0.5, r: 8, fill: 'none', stroke: '#fff' });
  add(svg, 'path', { d: 'M' + (AX - 15) + ' ' + (cy + 0.5) + 'h7M' + (AX - 11.5) + ' ' + (cy - 3) + 'v7', stroke: '#fff' });
})();
```
